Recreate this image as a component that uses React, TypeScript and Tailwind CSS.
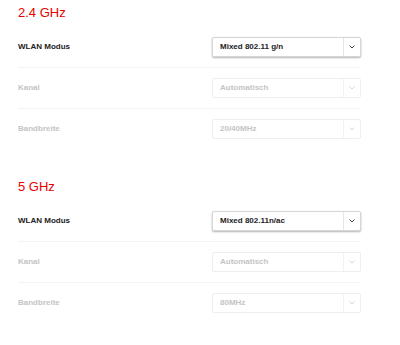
import React from "react";

type Row = {
  label: string;
  value: string;
  disabled?: boolean;
};

type Band = {
  title: string;
  rows: Row[];
};

const bands: Band[] = [
  {
    title: "2.4 GHz",
    rows: [
      { label: "WLAN Modus", value: "Mixed 802.11 g/n" },
      { label: "Kanal", value: "Automatisch", disabled: true },
      { label: "Bandbreite", value: "20/40MHz", disabled: true },
    ],
  },
  {
    title: "5 GHz",
    rows: [
      { label: "WLAN Modus", value: "Mixed 802.11n/ac" },
      { label: "Kanal", value: "Automatisch", disabled: true },
      { label: "Bandbreite", value: "80MHz", disabled: true },
    ],
  },
];

const Chevron = ({ disabled }: { disabled?: boolean }) => (
  <svg width="6" height="4" viewBox="0 0 6 4" fill="none">
    <polyline
      points="0.5,0.5 3,3 5.5,0.5"
      stroke={disabled ? "#d4d4d4" : "#444444"}
      strokeWidth="1"
    />
  </svg>
);

const Select = ({ value, disabled }: { value: string; disabled?: boolean }) => (
  <div
    className={
      disabled
        ? "flex h-[20px] w-[149px] items-center rounded-[2px] border border-[#efefef] bg-white"
        : "flex h-[20px] w-[149px] items-center rounded-[2px] border border-[#d6d6d6] bg-white shadow-[0_1px_2px_rgba(0,0,0,0.3)]"
    }
  >
    <span
      className={
        disabled
          ? "flex-1 pl-[7px] text-[8px] font-bold text-[#c4c4c4]"
          : "flex-1 pl-[7px] text-[8px] font-bold text-[#222222]"
      }
    >
      {value}
    </span>
    <div
      className={
        disabled
          ? "flex h-full w-[17px] items-center justify-center border-l border-[#f2f2f2]"
          : "flex h-full w-[17px] items-center justify-center border-l border-[#e6e6e6]"
      }
    >
      <Chevron disabled={disabled} />
    </div>
  </div>
);

export default function App() {
  return (
    <div
      className="min-h-[345px] w-[400px] bg-white pl-[18px] pt-[5px]"
      style={{ fontFamily: '"Liberation Sans", Arial, sans-serif' }}
    >
      <div className="flex w-[343px] flex-col gap-[30px]">
        {bands.map((band) => (
          <section key={band.title}>
            <h2 className="mb-[6px] text-[13px] leading-[16px] text-[#e60000]">{band.title}</h2>
            <div className="flex flex-col">
              {band.rows.map((row, i) => (
                <div
                  key={row.label}
                  className={
                    i < band.rows.length - 1
                      ? "flex items-center border-b border-[#f3f3f3] py-[10px]"
                      : "flex items-center py-[10px]"
                  }
                >
                  <span
                    className={
                      row.disabled
                        ? "w-[194px] text-[8px] font-bold text-[#c4c4c4]"
                        : "w-[194px] text-[8px] font-bold text-[#222222]"
                    }
                  >
                    {row.label}
                  </span>
                  <Select value={row.value} disabled={row.disabled} />
                </div>
              ))}
            </div>
          </section>
        ))}
      </div>
    </div>
  );
}
